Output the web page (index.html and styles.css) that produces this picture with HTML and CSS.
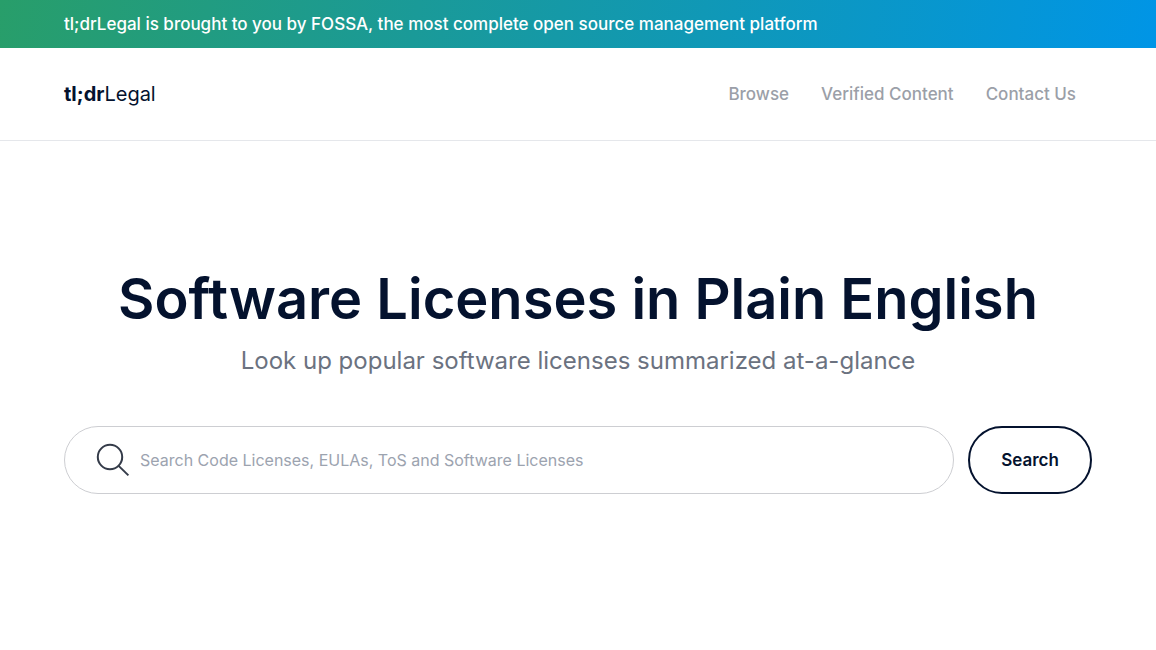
FILE: index.html
```html
<!DOCTYPE html>
<html lang="en">
<head>
<meta charset="utf-8">
<meta name="viewport" content="width=device-width, initial-scale=1">
<title>tl;drLegal</title>
<link rel="stylesheet" href="styles.css">
</head>
<body>
<div class="banner"><a class="banner-link" href="#">tl;drLegal is brought to you by FOSSA, the most complete open source management platform</a></div>
<header class="header">
<a class="logo" href="#"><b>tl;dr</b>Legal</a>
<nav class="nav">
<a href="#">Browse</a>
<a href="#">Verified Content</a>
<a href="#">Contact Us</a>
</nav>
</header>
<main class="hero">
<h1 class="title">Software Licenses in Plain English</h1>
<p class="subtitle">Look up popular software licenses summarized at-a-glance</p>
<form class="search">
<label class="field">
<svg class="icon" viewBox="0 0 34 34" aria-hidden="true"><circle cx="14" cy="14" r="12.2"/><path d="M22.4 22.6 32.4 32.4"/></svg>
<input class="input" type="search" aria-label="Search licenses" placeholder="Search Code Licenses, EULAs, ToS and Software Licenses">
</label>
<button class="button" type="submit">Search</button>
</form>
</main>
</body>
</html>
```
FILE: styles.css
```css
* {
  box-sizing: border-box;
}

body {
  margin: 0;
  background: #fff;
  color: #04122e;
  font: 17px/24px Inter, sans-serif;
}

a {
  color: inherit;
  text-decoration: none;
}

.banner {
  padding: 12px 64px;
  color: #fff;
  font-weight: 500;
  background: linear-gradient(100deg, #289e6a, #1a9a98 36%, #0095e6);
}

.header {
  display: flex;
  align-items: center;
  justify-content: space-between;
  padding: 33px 80px 33px 64px;
  border-bottom: 1px solid #e5e7eb;
}

.logo {
  font-size: 20px;
  line-height: 26px;
}

.nav {
  display: flex;
  gap: 32px;
  color: #9b9fa8;
  font-weight: 500;
}

.hero {
  padding: 120px 64px;
  text-align: center;
}

.title {
  margin: 0;
  font-size: 56px;
  line-height: 76px;
  font-weight: 600;
}

.subtitle {
  margin: 8px 0 0;
  color: #6b7280;
  font-size: 24px;
  line-height: 32px;
}

.search {
  display: flex;
  gap: 14px;
  margin-top: 49px;
}

.field {
  display: flex;
  flex: 1;
  align-items: center;
  gap: 10px;
  height: 68px;
  padding: 0 31px;
  border: 1px solid #cdced2;
  border-radius: 34px;
}

.icon {
  width: 34px;
  height: 34px;
  fill: none;
  stroke: #343b49;
  stroke-width: 2;
}

.input {
  flex: 1;
  min-width: 0;
  padding: 0;
  border: 0;
  outline: 0;
  background: none;
  font: inherit;
  font-size: 16px;
}

.input::placeholder {
  color: #9ca3af;
}

.button {
  min-width: 124px;
  padding: 0 16px;
  border: 2px solid #04122e;
  border-radius: 34px;
  background: #fff;
  color: inherit;
  font: inherit;
  font-weight: 600;
}
```
